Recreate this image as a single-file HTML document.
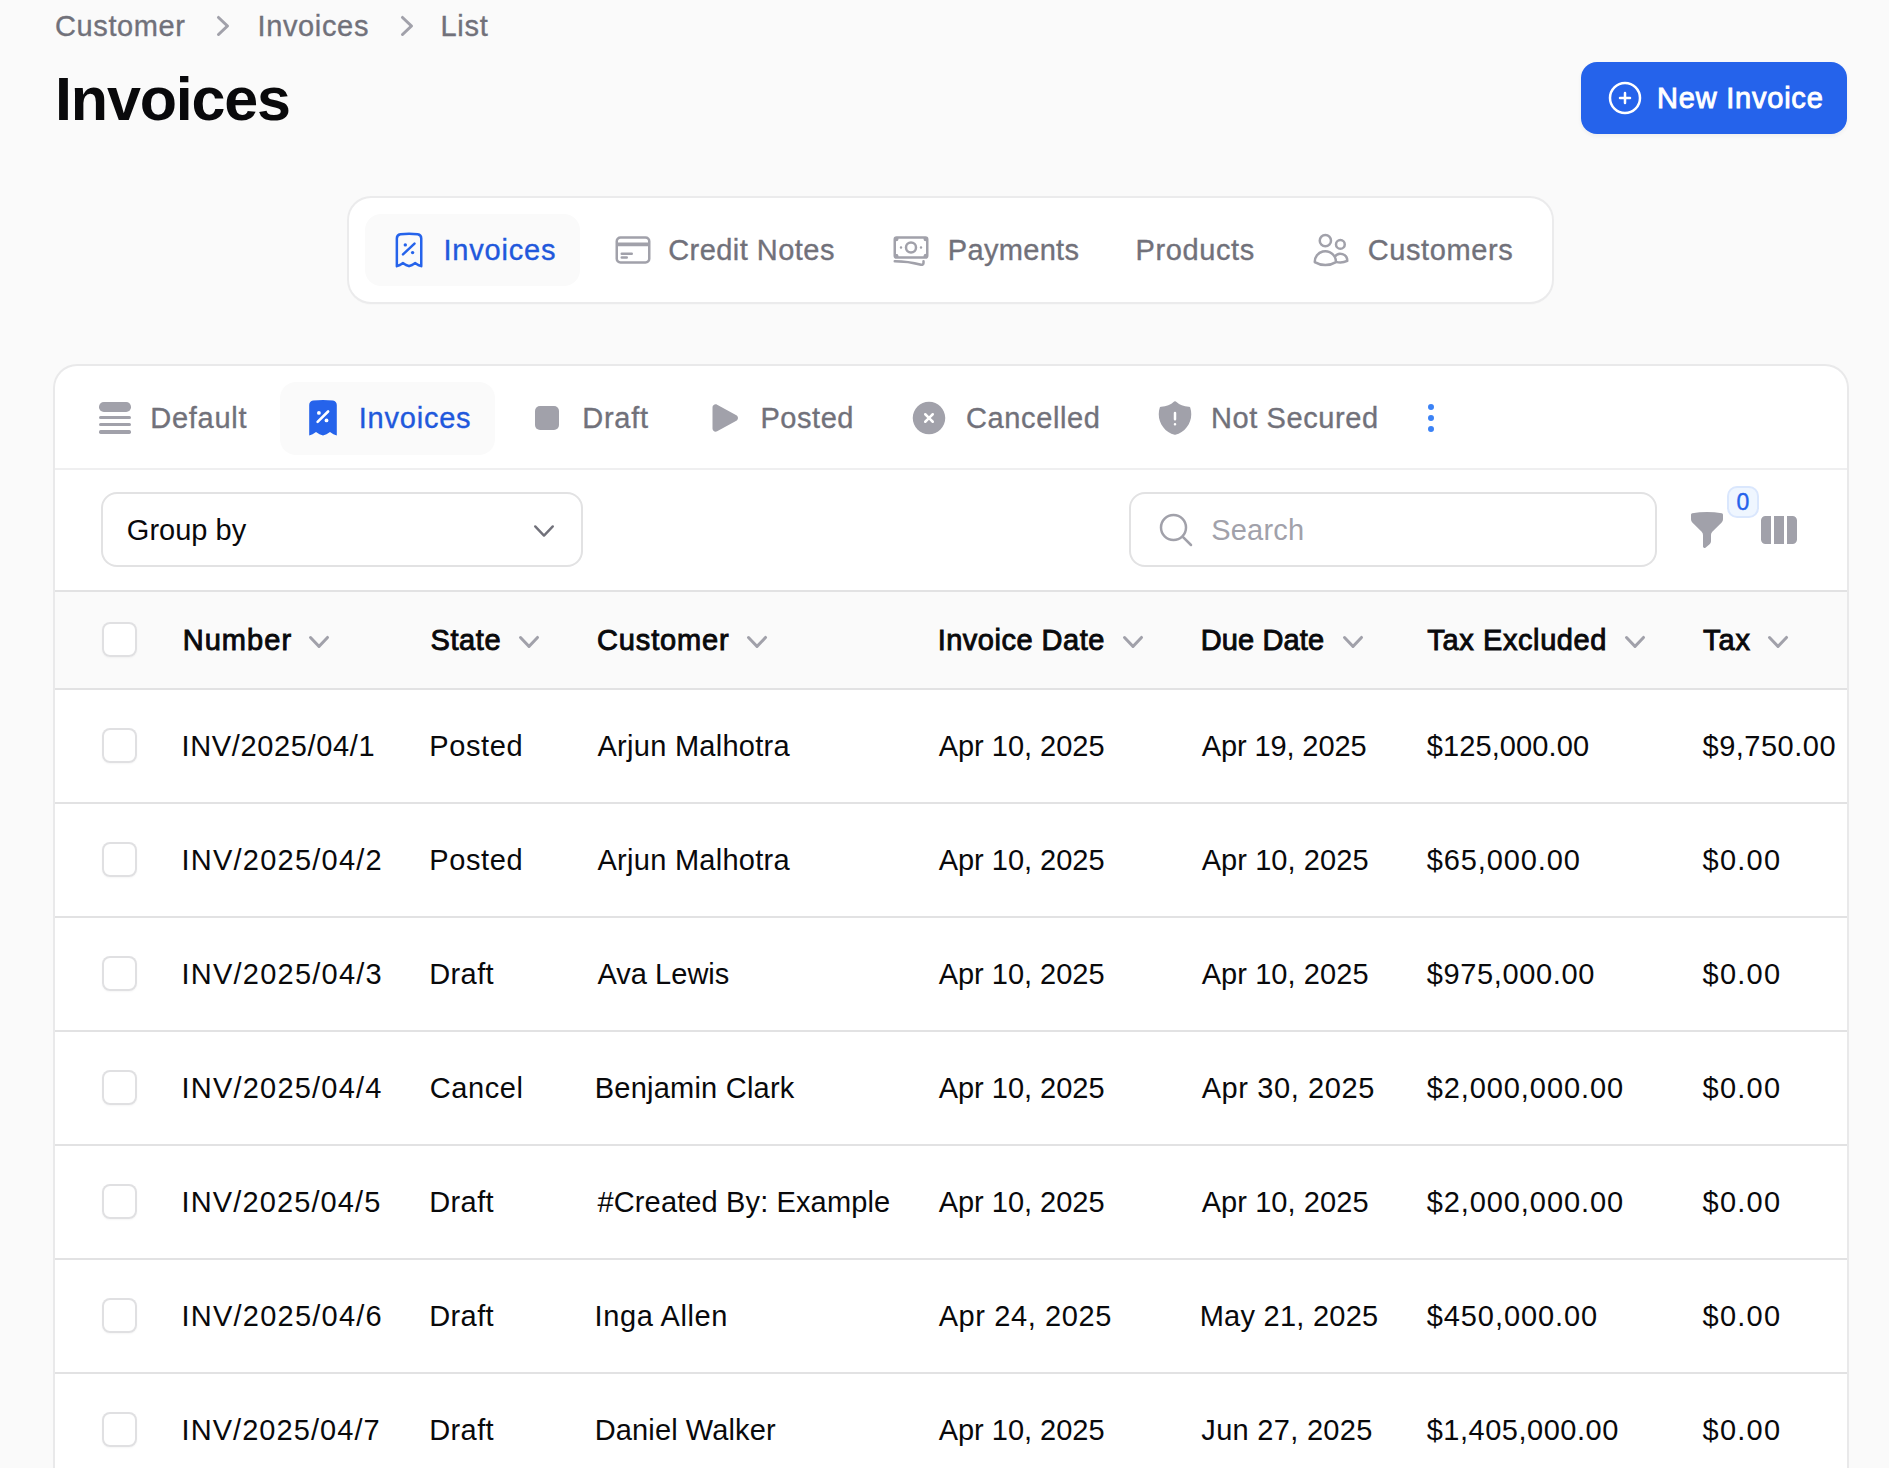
<!DOCTYPE html>
<html><head><meta charset="utf-8"><title>Invoices</title>
<style>
html,body{margin:0;padding:0}
body{width:1889px;height:1468px;overflow:hidden;position:relative;background:#fafafa;font-family:"Liberation Sans",sans-serif}
.t{position:absolute;white-space:nowrap}
.b{position:absolute}
.i{position:absolute;overflow:visible}
</style></head><body>
<svg class="i" style="left:202.6px;top:6px;width:40px;height:40px" viewBox="0 0 20 20" ><path fill="#a1a1aa" d="M7.21 14.77a.75.75 0 01.02-1.06L11.168 10 7.23 6.29a.75.75 0 111.04-1.08l4.5 4.25a.75.75 0 010 1.08l-4.5 4.25a.75.75 0 01-1.06-.02z"/></svg>
<svg class="i" style="left:386.5px;top:6px;width:40px;height:40px" viewBox="0 0 20 20" ><path fill="#a1a1aa" d="M7.21 14.77a.75.75 0 01.02-1.06L11.168 10 7.23 6.29a.75.75 0 111.04-1.08l4.5 4.25a.75.75 0 010 1.08l-4.5 4.25a.75.75 0 01-1.06-.02z"/></svg>
<div class="b" style="left:1581px;top:62px;width:266px;height:72px;background:#2563eb;border-radius:16px;box-shadow:0 2px 4px rgba(0,0,0,.05)"></div>
<svg class="i" style="left:1605px;top:78px;width:40px;height:40px" viewBox="0 0 24 24" ><path fill="none" stroke="#fff" stroke-width="1.5" stroke-linecap="round" stroke-linejoin="round" d="M12 9v6m3-3H9m12 0a9 9 0 11-18 0 9 9 0 0118 0z"/></svg>
<div class="b" style="left:349px;top:198px;width:1203px;height:104px;background:#fff;border-radius:22px;box-shadow:0 0 0 2px #ebebec,0 2px 2px rgba(0,0,0,.06)"></div>
<div class="b" style="left:365px;top:214px;width:215px;height:72px;background:#fafafa;border-radius:16px"></div>
<svg class="i" style="left:389px;top:230px;width:40px;height:40px" viewBox="0 0 40 40" ><g fill="none" stroke="#2563eb" stroke-width="2.5" stroke-linecap="round" stroke-linejoin="round"><path d="M7.85 36.2V8.6c0-2.2 1.5-4 3.6-4.25a74 74 0 0117.2 0c2.1.25 3.6 2.05 3.6 4.25V36.2l-3.05-1.2-3.05-1.9-3.05 1.9-3.05 1.2-3.05-1.2-3.05-1.9-3.05 1.9z"/><path d="M14 24.3l11.5-10.7"/></g><circle cx="16.3" cy="14.9" r="1.7" fill="#2563eb"/><circle cx="23.6" cy="22.6" r="1.7" fill="#2563eb"/></svg>
<svg class="i" style="left:613px;top:230px;width:40px;height:40px" viewBox="0 0 24 24" ><path fill="none" stroke-width="1.5" stroke-linecap="round" stroke-linejoin="round" stroke="#a1a1aa" d="M2.25 8.25h19.5M2.25 9h19.5m-16.5 5.25h6m-6 2.25h3m-3.75 3h15a2.25 2.25 0 002.25-2.25V6.75A2.25 2.25 0 0019.5 4.5h-15a2.25 2.25 0 00-2.25 2.25v10.5A2.25 2.25 0 004.5 19.5z"/></svg>
<svg class="i" style="left:891px;top:230px;width:40px;height:40px" viewBox="0 0 24 24" ><path fill="none" stroke-width="1.5" stroke-linecap="round" stroke-linejoin="round" stroke="#a1a1aa" d="M2.25 18.75a60.07 60.07 0 0115.797 2.101c.727.198 1.453-.342 1.453-1.096V18.75M3.75 4.5v.75A.75.75 0 013 6h-.75m0 0v-.375c0-.621.504-1.125 1.125-1.125H20.25M2.25 6v9m18-10.5v.75c0 .414.336.75.75.75h.75m-1.5-1.5h.375c.621 0 1.125.504 1.125 1.125v9.75c0 .621-.504 1.125-1.125 1.125h-.375m1.5-1.5H21a.75.75 0 00-.75.75v.75m0 0H3.75m0 0h-.375a1.125 1.125 0 01-1.125-1.125V15m1.5 1.5v-.75A.75.75 0 003 15h-.75M15 10.5a3 3 0 11-6 0 3 3 0 016 0zm3 0h.008v.008H18V10.5zm-12 0h.008v.008H6V10.5z"/></svg>
<svg class="i" style="left:1311px;top:230px;width:40px;height:40px" viewBox="0 0 24 24" ><path fill="none" stroke-width="1.5" stroke-linecap="round" stroke-linejoin="round" stroke="#a1a1aa" d="M15 19.128a9.38 9.38 0 002.625.372 9.337 9.337 0 004.121-.952 4.125 4.125 0 00-7.533-2.493M15 19.128v-.003c0-1.113-.285-2.16-.786-3.07M15 19.128v.106A12.318 12.318 0 018.624 21c-2.331 0-4.512-.645-6.374-1.766l-.001-.109a6.375 6.375 0 0111.964-3.07M12 6.375a3.375 3.375 0 11-6.75 0 3.375 3.375 0 016.75 0zm8.25 2.25a2.625 2.625 0 11-5.25 0 2.625 2.625 0 015.25 0z"/></svg>
<div class="b" style="left:55px;top:366px;width:1792px;height:1234px;background:#fff;border-radius:22px;box-shadow:0 0 0 2px #e9e9ea,0 2px 3px rgba(0,0,0,.05)"></div>
<div class="b" style="left:55px;top:468px;width:1792px;height:2px;background:#efeff0"></div>
<div class="b" style="left:280px;top:382px;width:215px;height:73px;background:#fafafa;border-radius:16px"></div>
<div class="b" style="left:99px;top:402px;width:32px;height:9.6px;border-radius:4.8px;background:#a1a1aa"></div>
<div class="b" style="left:99px;top:416.1px;width:32px;height:3.3px;border-radius:1.65px;background:#a1a1aa"></div>
<div class="b" style="left:99px;top:423.0px;width:32px;height:3.3px;border-radius:1.65px;background:#a1a1aa"></div>
<div class="b" style="left:99px;top:430.4px;width:32px;height:3.3px;border-radius:1.65px;background:#a1a1aa"></div>
<svg class="i" style="left:303px;top:398px;width:40px;height:40px" viewBox="0 0 40 40" ><path fill="#2563eb" d="M6.2 37.5V6.9c0-2.3 1.6-4.1 3.8-4.35a85 85 0 0120 0c2.2.25 3.8 2.05 3.8 4.35V37.5l-3.4-1.3-3.4-2.1-3.5 2.1-3.5 1.3-3.5-1.3-3.5-2.1-3.4 2.1z"/><g stroke="#fff" stroke-width="2.6" stroke-linecap="round"><path d="M14.6 23.9L25.1 13.5"/></g><circle cx="15.9" cy="14.9" r="1.9" fill="#fff"/><circle cx="23.5" cy="22.4" r="1.9" fill="#fff"/></svg>
<div class="b" style="left:534.8px;top:405.7px;width:24.7px;height:24.5px;border-radius:5px;background:#a1a1aa"></div>
<svg class="i" style="left:705px;top:398px;width:40px;height:40px" viewBox="0 0 24 24" ><path fill="#a1a1aa" d="M4.5 5.653c0-1.427 1.529-2.33 2.779-1.643l11.54 6.347c1.295.712 1.295 2.573 0 3.286L7.28 19.99c-1.25.687-2.779-.217-2.779-1.643V5.653z"/></svg>
<svg class="i" style="left:909px;top:398px;width:40px;height:40px" viewBox="0 0 24 24" ><path fill="#a1a1aa" fill-rule="evenodd" d="M12 2.25c-5.385 0-9.75 4.365-9.75 9.75s4.365 9.75 9.75 9.75 9.75-4.365 9.75-9.75S17.385 2.25 12 2.25zm-1.72 6.97a.75.75 0 10-1.06 1.06L10.94 12l-1.72 1.72a.75.75 0 101.06 1.06L12 13.06l1.72 1.72a.75.75 0 101.06-1.06L13.06 12l1.72-1.72a.75.75 0 10-1.06-1.06L12 10.94l-1.72-1.72z"/></svg>
<svg class="i" style="left:1155px;top:398px;width:40px;height:40px" viewBox="0 0 24 24" ><path fill="#a1a1aa" fill-rule="evenodd" d="M11.484 2.17a.75.75 0 011.032 0 11.209 11.209 0 007.877 3.08.75.75 0 01.722.515 12.74 12.74 0 01.635 3.985c0 5.942-4.064 10.933-9.563 12.348a.749.749 0 01-.374 0C6.314 20.683 2.25 15.692 2.25 9.75c0-1.39.223-2.73.635-3.985a.75.75 0 01.722-.516l.143.001c2.996 0 5.718-1.17 7.734-3.08zM12 8.25a.75.75 0 01.75.75v3.75a.75.75 0 01-1.5 0V9A.75.75 0 0112 8.25zM12 15a.75.75 0 00-.75.75v.008c0 .414.336.75.75.75h.008a.75.75 0 00.75-.75v-.008a.75.75 0 00-.75-.75H12z"/></svg>
<svg class="i" style="left:1411px;top:398px;width:40px;height:40px" viewBox="0 0 20 20" ><path fill="#3b82f6" d="M10 3a1.5 1.5 0 110 3 1.5 1.5 0 010-3zM10 8.5a1.5 1.5 0 110 3 1.5 1.5 0 010-3zM11.5 15.5a1.5 1.5 0 10-3 0 1.5 1.5 0 003 0z"/></svg>
<div class="b" style="left:101px;top:492px;width:482px;height:75px;background:#fff;border-radius:16px;box-shadow:inset 0 0 0 2px #e2e2e3"></div>
<svg class="i" style="left:514px;top:510px;width:40px;height:40px" viewBox="0 0 40 40" ><path fill="none" stroke="#71717a" stroke-width="2.4" stroke-linecap="round" stroke-linejoin="round" d="M21.2 16.4L30 25.6 38.8 16.4"/></svg>
<div class="b" style="left:1129px;top:492px;width:528px;height:75px;background:#fff;border-radius:16px;box-shadow:inset 0 0 0 2px #e2e2e3"></div>
<svg class="i" style="left:1155.5px;top:510.4px;width:40px;height:40px" viewBox="0 0 24 24" ><path fill="none" stroke-width="1.5" stroke-linecap="round" stroke-linejoin="round" stroke="#a1a1aa" d="M21 21l-5.197-5.197m0 0A7.5 7.5 0 105.196 5.196a7.5 7.5 0 0010.607 10.607z"/></svg>
<svg class="i" style="left:1687px;top:510px;width:40px;height:40px" viewBox="0 0 20 20" ><path fill="#a1a1aa" d="M2.628 1.601C5.028 1.206 7.49 1 10 1s4.973.206 7.372.601a.75.75 0 01.628.74v2.288a2.25 2.25 0 01-.659 1.59l-4.682 4.683a2.25 2.25 0 00-.659 1.59v3.037c0 .684-.31 1.33-.844 1.757l-1.937 1.55A.75.75 0 018 18.25v-5.757a2.25 2.25 0 00-.659-1.591L2.659 6.22A2.25 2.25 0 012 4.629V2.34a.75.75 0 01.628-.74z"/></svg>
<div class="b" style="left:1727.4px;top:486.4px;width:31.199999999999818px;height:31.5px;background:#eff6ff;border-radius:10px;box-shadow:inset 0 0 0 2px rgba(37,99,235,.1)"></div>
<svg class="i" style="left:1759px;top:510px;width:40px;height:40px" viewBox="0 0 20 20" ><path fill="#a1a1aa" d="M14 17h2.75A2.25 2.25 0 0019 14.75v-9.5A2.25 2.25 0 0016.75 3H14v14zM12.5 3h-5v14h5V3zM3.25 3H6v14H3.25A2.25 2.25 0 011 14.75v-9.5A2.25 2.25 0 013.25 3z"/></svg>
<div class="b" style="left:55px;top:590px;width:1792px;height:100px;background:#fafafa"></div>
<div class="b" style="left:55px;top:590px;width:1792px;height:2px;background:#e2e2e3"></div>
<div class="b" style="left:55px;top:688px;width:1792px;height:2px;background:#e2e2e3"></div>
<svg class="i" style="left:298.54px;top:622.4px;width:40px;height:40px" viewBox="0 0 20 20" ><path fill="#a1a1aa" d="M5.23 7.21a.75.75 0 011.06.02L10 11.168l3.71-3.938a.75.75 0 111.08 1.04l-4.25 4.5a.75.75 0 01-1.08 0l-4.25-4.5a.75.75 0 01.02-1.06z"/></svg>
<svg class="i" style="left:508.54px;top:622.4px;width:40px;height:40px" viewBox="0 0 20 20" ><path fill="#a1a1aa" d="M5.23 7.21a.75.75 0 011.06.02L10 11.168l3.71-3.938a.75.75 0 111.08 1.04l-4.25 4.5a.75.75 0 01-1.08 0l-4.25-4.5a.75.75 0 01.02-1.06z"/></svg>
<svg class="i" style="left:736.84px;top:622.4px;width:40px;height:40px" viewBox="0 0 20 20" ><path fill="#a1a1aa" d="M5.23 7.21a.75.75 0 011.06.02L10 11.168l3.71-3.938a.75.75 0 111.08 1.04l-4.25 4.5a.75.75 0 01-1.08 0l-4.25-4.5a.75.75 0 01.02-1.06z"/></svg>
<svg class="i" style="left:1112.84px;top:622.4px;width:40px;height:40px" viewBox="0 0 20 20" ><path fill="#a1a1aa" d="M5.23 7.21a.75.75 0 011.06.02L10 11.168l3.71-3.938a.75.75 0 111.08 1.04l-4.25 4.5a.75.75 0 01-1.08 0l-4.25-4.5a.75.75 0 01.02-1.06z"/></svg>
<svg class="i" style="left:1332.54px;top:622.4px;width:40px;height:40px" viewBox="0 0 20 20" ><path fill="#a1a1aa" d="M5.23 7.21a.75.75 0 011.06.02L10 11.168l3.71-3.938a.75.75 0 111.08 1.04l-4.25 4.5a.75.75 0 01-1.08 0l-4.25-4.5a.75.75 0 01.02-1.06z"/></svg>
<svg class="i" style="left:1614.74px;top:622.4px;width:40px;height:40px" viewBox="0 0 20 20" ><path fill="#a1a1aa" d="M5.23 7.21a.75.75 0 011.06.02L10 11.168l3.71-3.938a.75.75 0 111.08 1.04l-4.25 4.5a.75.75 0 01-1.08 0l-4.25-4.5a.75.75 0 01.02-1.06z"/></svg>
<svg class="i" style="left:1758.44px;top:622.4px;width:40px;height:40px" viewBox="0 0 20 20" ><path fill="#a1a1aa" d="M5.23 7.21a.75.75 0 011.06.02L10 11.168l3.71-3.938a.75.75 0 111.08 1.04l-4.25 4.5a.75.75 0 01-1.08 0l-4.25-4.5a.75.75 0 01.02-1.06z"/></svg>
<div class="b" style="left:102px;top:622px;width:35px;height:35px;border-radius:8px;background:#fff;box-shadow:inset 0 0 0 2px #e0e0e2,0 1px 2px rgba(0,0,0,.04)"></div>
<div class="b" style="left:102px;top:728px;width:35px;height:35px;border-radius:8px;background:#fff;box-shadow:inset 0 0 0 2px #e0e0e2,0 1px 2px rgba(0,0,0,.04)"></div>
<div class="b" style="left:55px;top:802px;width:1792px;height:2px;background:#e2e2e3"></div>
<div class="b" style="left:102px;top:842px;width:35px;height:35px;border-radius:8px;background:#fff;box-shadow:inset 0 0 0 2px #e0e0e2,0 1px 2px rgba(0,0,0,.04)"></div>
<div class="b" style="left:55px;top:916px;width:1792px;height:2px;background:#e2e2e3"></div>
<div class="b" style="left:102px;top:956px;width:35px;height:35px;border-radius:8px;background:#fff;box-shadow:inset 0 0 0 2px #e0e0e2,0 1px 2px rgba(0,0,0,.04)"></div>
<div class="b" style="left:55px;top:1030px;width:1792px;height:2px;background:#e2e2e3"></div>
<div class="b" style="left:102px;top:1070px;width:35px;height:35px;border-radius:8px;background:#fff;box-shadow:inset 0 0 0 2px #e0e0e2,0 1px 2px rgba(0,0,0,.04)"></div>
<div class="b" style="left:55px;top:1144px;width:1792px;height:2px;background:#e2e2e3"></div>
<div class="b" style="left:102px;top:1184px;width:35px;height:35px;border-radius:8px;background:#fff;box-shadow:inset 0 0 0 2px #e0e0e2,0 1px 2px rgba(0,0,0,.04)"></div>
<div class="b" style="left:55px;top:1258px;width:1792px;height:2px;background:#e2e2e3"></div>
<div class="b" style="left:102px;top:1298px;width:35px;height:35px;border-radius:8px;background:#fff;box-shadow:inset 0 0 0 2px #e0e0e2,0 1px 2px rgba(0,0,0,.04)"></div>
<div class="b" style="left:55px;top:1372px;width:1792px;height:2px;background:#e2e2e3"></div>
<div class="b" style="left:102px;top:1412px;width:35px;height:35px;border-radius:8px;background:#fff;box-shadow:inset 0 0 0 2px #e0e0e2,0 1px 2px rgba(0,0,0,.04)"></div>
<div class="b" style="left:55px;top:1486px;width:1792px;height:2px;background:#e2e2e3"></div>
<div class="t" style="left:54.98px;top:5.60px;font-size:29px;line-height:40px;color:#71717a;-webkit-text-stroke:0.35px #71717a;letter-spacing:0.617px">Customer</div>
<div class="t" style="left:257.49px;top:5.60px;font-size:29px;line-height:40px;color:#71717a;-webkit-text-stroke:0.35px #71717a;letter-spacing:0.644px">Invoices</div>
<div class="t" style="left:440.49px;top:5.60px;font-size:29px;line-height:40px;color:#71717a;-webkit-text-stroke:0.35px #71717a;letter-spacing:0.723px">List</div>
<div class="t" style="left:55.00px;top:59.00px;font-size:61px;line-height:80px;font-weight:700;color:#09090b;letter-spacing:-1.164px">Invoices</div>
<div class="t" style="left:1657.02px;top:78.00px;font-size:29px;line-height:40px;color:#ffffff;-webkit-text-stroke:0.9px #ffffff;letter-spacing:0.779px">New Invoice</div>
<div class="t" style="left:443.49px;top:230.00px;font-size:29px;line-height:40px;color:#2158dc;-webkit-text-stroke:0.35px #2158dc;letter-spacing:0.787px">Invoices</div>
<div class="t" style="left:668.15px;top:230.00px;font-size:29px;line-height:40px;color:#71717a;-webkit-text-stroke:0.35px #71717a;letter-spacing:0.468px">Credit Notes</div>
<div class="t" style="left:947.83px;top:230.00px;font-size:29px;line-height:40px;color:#71717a;-webkit-text-stroke:0.35px #71717a;letter-spacing:0.310px">Payments</div>
<div class="t" style="left:1135.51px;top:230.00px;font-size:29px;line-height:40px;color:#71717a;-webkit-text-stroke:0.35px #71717a;letter-spacing:0.617px">Products</div>
<div class="t" style="left:1367.66px;top:230.00px;font-size:29px;line-height:40px;color:#71717a;-webkit-text-stroke:0.35px #71717a;letter-spacing:0.625px">Customers</div>
<div class="t" style="left:150.34px;top:398.00px;font-size:29px;line-height:40px;color:#71717a;-webkit-text-stroke:0.35px #71717a;letter-spacing:0.720px">Default</div>
<div class="t" style="left:358.81px;top:398.00px;font-size:29px;line-height:40px;color:#2158dc;-webkit-text-stroke:0.35px #2158dc;letter-spacing:0.769px">Invoices</div>
<div class="t" style="left:582.15px;top:398.00px;font-size:29px;line-height:40px;color:#71717a;-webkit-text-stroke:0.35px #71717a;letter-spacing:0.797px">Draft</div>
<div class="t" style="left:760.49px;top:398.00px;font-size:29px;line-height:40px;color:#71717a;-webkit-text-stroke:0.35px #71717a;letter-spacing:0.540px">Posted</div>
<div class="t" style="left:966.00px;top:398.00px;font-size:29px;line-height:40px;color:#71717a;-webkit-text-stroke:0.35px #71717a;letter-spacing:0.625px">Cancelled</div>
<div class="t" style="left:1211.00px;top:398.00px;font-size:29px;line-height:40px;color:#71717a;-webkit-text-stroke:0.35px #71717a;letter-spacing:0.602px">Not Secured</div>
<div class="t" style="left:126.87px;top:509.80px;font-size:29px;line-height:40px;color:#09090b;letter-spacing:0.000px">Group by</div>
<div class="t" style="left:1211.32px;top:509.50px;font-size:29px;line-height:40px;color:#a1a1aa;letter-spacing:0.170px">Search</div>
<div class="t" style="left:1736.51px;top:481.70px;font-size:23px;line-height:40px;color:#2563eb;-webkit-text-stroke:0.4px #2563eb;letter-spacing:0.000px">0</div>
<div class="t" style="left:182.68px;top:620.00px;font-size:29px;line-height:40px;color:#09090b;-webkit-text-stroke:0.9px #09090b;letter-spacing:1.064px">Number</div>
<div class="t" style="left:430.51px;top:620.00px;font-size:29px;line-height:40px;color:#09090b;-webkit-text-stroke:0.9px #09090b;letter-spacing:0.585px">State</div>
<div class="t" style="left:597.00px;top:620.00px;font-size:29px;line-height:40px;color:#09090b;-webkit-text-stroke:0.9px #09090b;letter-spacing:0.860px">Customer</div>
<div class="t" style="left:937.66px;top:620.00px;font-size:29px;line-height:40px;color:#09090b;-webkit-text-stroke:0.9px #09090b;letter-spacing:0.499px">Invoice Date</div>
<div class="t" style="left:1200.66px;top:620.00px;font-size:29px;line-height:40px;color:#09090b;-webkit-text-stroke:0.9px #09090b;letter-spacing:0.121px">Due Date</div>
<div class="t" style="left:1427.34px;top:620.00px;font-size:29px;line-height:40px;color:#09090b;-webkit-text-stroke:0.9px #09090b;letter-spacing:0.605px">Tax Excluded</div>
<div class="t" style="left:1702.98px;top:620.00px;font-size:29px;line-height:40px;color:#09090b;-webkit-text-stroke:0.9px #09090b;letter-spacing:0.935px">Tax</div>
<div class="t" style="left:181.51px;top:726.30px;font-size:29px;line-height:40px;color:#09090b;letter-spacing:0.638px">INV/2025/04/1</div>
<div class="t" style="left:429.15px;top:726.30px;font-size:29px;line-height:40px;color:#09090b;letter-spacing:0.642px">Posted</div>
<div class="t" style="left:597.51px;top:726.30px;font-size:29px;line-height:40px;color:#09090b;letter-spacing:0.270px">Arjun Malhotra</div>
<div class="t" style="left:938.66px;top:726.30px;font-size:29px;line-height:40px;color:#09090b;letter-spacing:-0.014px">Apr 10, 2025</div>
<div class="t" style="left:1201.66px;top:726.30px;font-size:29px;line-height:40px;color:#09090b;letter-spacing:-0.106px">Apr 19, 2025</div>
<div class="t" style="left:1426.70px;top:726.30px;font-size:29px;line-height:40px;color:#09090b;letter-spacing:0.111px">$125,000.00</div>
<div class="t" style="left:1702.51px;top:726.30px;font-size:29px;line-height:40px;color:#09090b;letter-spacing:0.500px">$9,750.00</div>
<div class="t" style="left:181.51px;top:840.30px;font-size:29px;line-height:40px;color:#09090b;letter-spacing:1.236px">INV/2025/04/2</div>
<div class="t" style="left:429.15px;top:840.30px;font-size:29px;line-height:40px;color:#09090b;letter-spacing:0.642px">Posted</div>
<div class="t" style="left:597.51px;top:840.30px;font-size:29px;line-height:40px;color:#09090b;letter-spacing:0.270px">Arjun Malhotra</div>
<div class="t" style="left:938.66px;top:840.30px;font-size:29px;line-height:40px;color:#09090b;letter-spacing:-0.014px">Apr 10, 2025</div>
<div class="t" style="left:1201.66px;top:840.30px;font-size:29px;line-height:40px;color:#09090b;letter-spacing:0.077px">Apr 10, 2025</div>
<div class="t" style="left:1426.70px;top:840.30px;font-size:29px;line-height:40px;color:#09090b;letter-spacing:0.903px">$65,000.00</div>
<div class="t" style="left:1702.51px;top:840.30px;font-size:29px;line-height:40px;color:#09090b;letter-spacing:1.250px">$0.00</div>
<div class="t" style="left:181.51px;top:954.30px;font-size:29px;line-height:40px;color:#09090b;letter-spacing:1.236px">INV/2025/04/3</div>
<div class="t" style="left:429.15px;top:954.30px;font-size:29px;line-height:40px;color:#09090b;letter-spacing:0.420px">Draft</div>
<div class="t" style="left:597.51px;top:954.30px;font-size:29px;line-height:40px;color:#09090b;letter-spacing:0.021px">Ava Lewis</div>
<div class="t" style="left:938.66px;top:954.30px;font-size:29px;line-height:40px;color:#09090b;letter-spacing:-0.014px">Apr 10, 2025</div>
<div class="t" style="left:1201.66px;top:954.30px;font-size:29px;line-height:40px;color:#09090b;letter-spacing:0.077px">Apr 10, 2025</div>
<div class="t" style="left:1426.70px;top:954.30px;font-size:29px;line-height:40px;color:#09090b;letter-spacing:0.645px">$975,000.00</div>
<div class="t" style="left:1702.51px;top:954.30px;font-size:29px;line-height:40px;color:#09090b;letter-spacing:1.250px">$0.00</div>
<div class="t" style="left:181.51px;top:1068.30px;font-size:29px;line-height:40px;color:#09090b;letter-spacing:1.209px">INV/2025/04/4</div>
<div class="t" style="left:429.85px;top:1068.30px;font-size:29px;line-height:40px;color:#09090b;letter-spacing:0.562px">Cancel</div>
<div class="t" style="left:594.81px;top:1068.30px;font-size:29px;line-height:40px;color:#09090b;letter-spacing:0.221px">Benjamin Clark</div>
<div class="t" style="left:938.66px;top:1068.30px;font-size:29px;line-height:40px;color:#09090b;letter-spacing:-0.014px">Apr 10, 2025</div>
<div class="t" style="left:1201.66px;top:1068.30px;font-size:29px;line-height:40px;color:#09090b;letter-spacing:0.607px">Apr 30, 2025</div>
<div class="t" style="left:1426.70px;top:1068.30px;font-size:29px;line-height:40px;color:#09090b;letter-spacing:0.913px">$2,000,000.00</div>
<div class="t" style="left:1702.51px;top:1068.30px;font-size:29px;line-height:40px;color:#09090b;letter-spacing:1.250px">$0.00</div>
<div class="t" style="left:181.51px;top:1182.30px;font-size:29px;line-height:40px;color:#09090b;letter-spacing:1.122px">INV/2025/04/5</div>
<div class="t" style="left:429.15px;top:1182.30px;font-size:29px;line-height:40px;color:#09090b;letter-spacing:0.420px">Draft</div>
<div class="t" style="left:597.51px;top:1182.30px;font-size:29px;line-height:40px;color:#09090b;letter-spacing:0.131px">#Created By: Example</div>
<div class="t" style="left:938.66px;top:1182.30px;font-size:29px;line-height:40px;color:#09090b;letter-spacing:-0.014px">Apr 10, 2025</div>
<div class="t" style="left:1201.66px;top:1182.30px;font-size:29px;line-height:40px;color:#09090b;letter-spacing:0.077px">Apr 10, 2025</div>
<div class="t" style="left:1426.70px;top:1182.30px;font-size:29px;line-height:40px;color:#09090b;letter-spacing:0.913px">$2,000,000.00</div>
<div class="t" style="left:1702.51px;top:1182.30px;font-size:29px;line-height:40px;color:#09090b;letter-spacing:1.250px">$0.00</div>
<div class="t" style="left:181.51px;top:1296.30px;font-size:29px;line-height:40px;color:#09090b;letter-spacing:1.236px">INV/2025/04/6</div>
<div class="t" style="left:429.15px;top:1296.30px;font-size:29px;line-height:40px;color:#09090b;letter-spacing:0.420px">Draft</div>
<div class="t" style="left:594.51px;top:1296.30px;font-size:29px;line-height:40px;color:#09090b;letter-spacing:0.610px">Inga Allen</div>
<div class="t" style="left:938.66px;top:1296.30px;font-size:29px;line-height:40px;color:#09090b;letter-spacing:0.607px">Apr 24, 2025</div>
<div class="t" style="left:1199.66px;top:1296.30px;font-size:29px;line-height:40px;color:#09090b;letter-spacing:0.255px">May 21, 2025</div>
<div class="t" style="left:1426.70px;top:1296.30px;font-size:29px;line-height:40px;color:#09090b;letter-spacing:0.928px">$450,000.00</div>
<div class="t" style="left:1702.51px;top:1296.30px;font-size:29px;line-height:40px;color:#09090b;letter-spacing:1.250px">$0.00</div>
<div class="t" style="left:181.51px;top:1410.30px;font-size:29px;line-height:40px;color:#09090b;letter-spacing:1.068px">INV/2025/04/7</div>
<div class="t" style="left:429.15px;top:1410.30px;font-size:29px;line-height:40px;color:#09090b;letter-spacing:0.420px">Draft</div>
<div class="t" style="left:594.81px;top:1410.30px;font-size:29px;line-height:40px;color:#09090b;letter-spacing:0.112px">Daniel Walker</div>
<div class="t" style="left:938.66px;top:1410.30px;font-size:29px;line-height:40px;color:#09090b;letter-spacing:-0.014px">Apr 10, 2025</div>
<div class="t" style="left:1201.36px;top:1410.30px;font-size:29px;line-height:40px;color:#09090b;letter-spacing:0.300px">Jun 27, 2025</div>
<div class="t" style="left:1426.70px;top:1410.30px;font-size:29px;line-height:40px;color:#09090b;letter-spacing:0.511px">$1,405,000.00</div>
<div class="t" style="left:1702.51px;top:1410.30px;font-size:29px;line-height:40px;color:#09090b;letter-spacing:1.250px">$0.00</div>
</body></html>
